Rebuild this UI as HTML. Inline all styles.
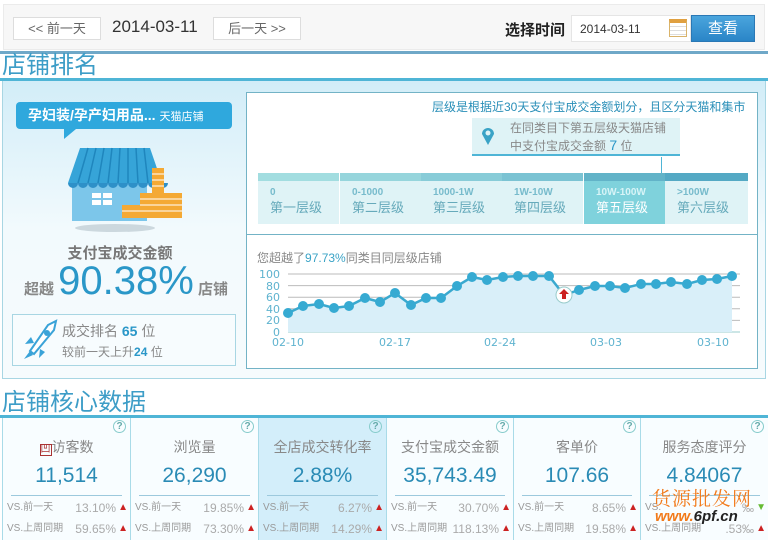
<!DOCTYPE html>
<html><head><meta charset="utf-8"><style>
*{margin:0;padding:0;box-sizing:border-box}
body{width:768px;height:540px;overflow:hidden;background:#fff;font-family:"Liberation Sans","Noto Sans CJK SC",sans-serif;position:relative;color:#555}
.a{position:absolute}
.btn{position:absolute;top:17px;height:23px;border:1px solid #ddd;background:#fff;font-size:13px;color:#666;text-align:center;line-height:21px}
.tier{position:absolute;top:181px;height:43px;width:81px;background:#dff3f6;color:#5bb;font-size:12px;padding:5px 0 0 12px;line-height:14px}
.tier b{font-size:10px;color:#7bc;font-weight:bold;display:block}
.tier span{color:#6ab;font-size:13px;line-height:16px}
.card{position:absolute;top:418px;height:122px;border-left:1px solid #a9dbe8;background:#f8fdff;text-align:center}
.card .t{margin-top:19px;font-size:14px;color:#888}
.card .v{font-size:21px;color:#2a8bb5;margin-top:6px;line-height:26px}
.card .ln{margin:6px 8px 0;border-top:1px solid #9cc9dd}
.card .r{font-size:10px;color:#999;text-align:left;padding:0 4px;position:relative;height:21px;line-height:20px}
.card .r i{font-style:normal;position:absolute;right:14px;font-size:12px;color:#aaa}
.card .r u{text-decoration:none;position:absolute;right:2px;top:0;color:#c22;font-size:10px}
.q{position:absolute;right:4px;top:2px;width:13px;height:13px;border:1px solid #8cc;border-radius:50%;font-size:10px;line-height:11px;color:#6aa;font-weight:bold}
</style></head><body>
<div class="a" style="left:3px;top:4px;width:762px;height:46px;background:#f7f7f7;border:1px solid #ebebeb"></div>
<div class="btn" style="left:13px;width:88px">&lt;&lt; 前一天</div>
<div class="a" style="left:112px;top:17px;font-size:17px;color:#333">2014-03-11</div>
<div class="btn" style="left:213px;width:88px">后一天 &gt;&gt;</div>
<div class="a" style="left:505px;top:19px;font-size:15px;font-weight:bold;color:#222">选择时间</div>
<div class="a" style="left:571px;top:15px;width:120px;height:27px;background:#fff;border:1px solid #e5e5e5;font-size:12px;color:#333;padding:6px 8px">2014-03-11</div>
<div class="a" style="left:669px;top:19px;width:18px;height:18px;background:repeating-linear-gradient(#fff 0 3px,#ddd 3px 4px);border:1px solid #d9b36a;border-top:4px solid #e0a040"></div>
<div class="a" style="left:691px;top:15px;width:64px;height:27px;background:linear-gradient(#4aa5dd,#2a85c7);border:1px solid #2a78b5;color:#fff;font-size:15px;text-align:center;line-height:25px">查看</div>
<div class="a" style="left:0;top:51px;width:768px;height:3px;background:#6fa8c8"></div>
<div class="a" style="left:2px;top:52px;font-size:24px;color:#3d9dc7;line-height:28px">店铺排名</div>
<div class="a" style="left:0;top:78px;width:768px;height:3px;background:#4fb5d6"></div>
<div class="a" style="left:2px;top:81px;width:764px;height:298px;background:linear-gradient(#d2edf8,#f2fafd 50%,#f6fbfd);border:1px solid #a8d6e3;border-top:none"></div>
<div class="a" style="left:16px;top:102px;width:216px;height:27px;background:#2fa8dd;border-radius:4px;color:#fff;font-size:14px;font-weight:bold;padding:4px 12px;line-height:19px">孕妇装/孕产妇用品... <span style="font-weight:normal;font-size:11px">天猫店铺</span></div>
<div class="a" style="left:64px;top:129px;width:0;height:0;border-left:12px solid #2fa8dd;border-bottom:10px solid transparent"></div>
<svg class="a" style="left:60px;top:143px" width="130" height="90" viewBox="0 0 130 90">
<ellipse cx="55" cy="85" rx="40" ry="4" fill="#ccd8de"/>
<rect x="12" y="40" width="75" height="38" fill="#7cc6ea"/>
<rect x="32" y="50" width="20" height="12" fill="#fff"/><rect x="41" y="50" width="2" height="12" fill="#7cc6ea"/><rect x="32" y="55" width="20" height="2" fill="#7cc6ea"/>
<path d="M20 5h70l12 35h-94z" fill="#36a4d8"/>
<g stroke="#1f86bd" stroke-width="1.5"><line x1="28" y1="5" x2="18" y2="40"/><line x1="36" y1="5" x2="28" y2="40"/><line x1="44" y1="5" x2="38" y2="40"/><line x1="52" y1="5" x2="48" y2="40"/><line x1="60" y1="5" x2="58" y2="40"/><line x1="68" y1="5" x2="68" y2="40"/><line x1="76" y1="5" x2="78" y2="40"/><line x1="84" y1="5" x2="88" y2="40"/></g>
<path d="M8 40a5 5 0 0 0 10 0a5 5 0 0 0 10 0a5 5 0 0 0 10 0a5 5 0 0 0 10 0a5 5 0 0 0 10 0a5 5 0 0 0 10 0a5 5 0 0 0 10 0a5 5 0 0 0 10 0a5 5 0 0 0 10 0a5 5 0 0 0 10 0z" fill="#2e90c8"/>
<rect x="92" y="25" width="12" height="50" fill="#f4a934"/><rect x="80" y="50" width="42" height="25" fill="#f4a934"/><rect x="62" y="62" width="60" height="13" fill="#f4a934"/>
<g stroke="#fff" stroke-width="1"><line x1="62" y1="68" x2="122" y2="68"/><line x1="80" y1="56" x2="122" y2="56"/><line x1="92" y1="31" x2="104" y2="31"/><line x1="92" y1="37" x2="104" y2="37"/><line x1="92" y1="43" x2="104" y2="43"/><line x1="80" y1="62" x2="122" y2="62"/></g>
</svg>
<div class="a" style="left:0;top:242px;width:240px;text-align:center;font-size:15px;color:#777;font-weight:bold">支付宝成交金额</div>
<div class="a" style="left:24px;top:258px;font-size:40px;color:#2a97c8;line-height:46px"><span style="font-size:15px;color:#888;font-weight:bold">超越 </span>90.38%<span style="font-size:15px;color:#888;font-weight:bold"> 店铺</span></div>
<div class="a" style="left:12px;top:314px;width:224px;height:52px;border:1px solid #a8d6e3;background:#f7fcfe"></div>
<svg class="a" style="left:20px;top:317px" width="42" height="44"><path d="M10 34l18-26 8-4 -2 9 -20 24z" fill="#fff" stroke="#3aa3d8" stroke-width="2"/><path d="M10 34l-6 8 9-4z M14 26l-9 1 6-7z M20 32l-1 9 6-6z" fill="#3aa3d8"/><circle cx="27" cy="16" r="3" fill="#3aa3d8"/></svg>
<div class="a" style="left:62px;top:321px;font-size:14px;color:#888">成交排名 <b style="color:#2a97c8">65</b> 位</div>
<div class="a" style="left:62px;top:343px;font-size:12px;color:#888">较前一天上升<b style="color:#2a97c8">24</b> 位</div>
<div class="a" style="left:246px;top:92px;width:512px;height:277px;background:#fff;border:1px solid #73b3c6"></div>
<div class="a" style="left:246px;top:234px;width:512px;height:1px;background:#73b3c6"></div>
<div class="a" style="left:432px;top:98px;font-size:12px;color:#2a8fb8">层级是根据近30天支付宝成交金额划分，且区分天猫和集市</div>
<div class="a" style="left:472px;top:118px;width:208px;height:38px;background:#dff3f6;border-bottom:2px solid #4fb5d6;font-size:12px;color:#888;padding:2px 0 0 38px;line-height:17px">在同类目下第五层级天猫店铺<br>中支付宝成交金额 <span style="color:#2a97c8;font-size:14px">7</span> 位</div>
<svg class="a" style="left:481px;top:126px" width="14" height="20"><path d="M7 19L1 8a6 6 0 1 1 12 0z" fill="#3aa3c6"/><circle cx="7" cy="7" r="2.5" fill="#dff3f6"/></svg>
<div class="a" style="left:661px;top:157px;width:1px;height:20px;background:#4fb5d6"></div>
<div class="a" style="left:258px;top:173px;width:81px;height:8px;background:#a2dde0"></div>
<div class="a" style="left:340px;top:173px;width:81px;height:8px;background:#96d5dc"></div>
<div class="a" style="left:421px;top:173px;width:81px;height:8px;background:#88ccd8"></div>
<div class="a" style="left:502px;top:173px;width:81px;height:8px;background:#7bc3d3"></div>
<div class="a" style="left:584px;top:173px;width:81px;height:8px;background:#62b3c8"></div>
<div class="a" style="left:665px;top:173px;width:83px;height:8px;background:#54a9c4"></div>
<div class="tier" style="left:258px"><b>0</b><span>第一层级</span></div>
<div class="tier" style="left:340px"><b>0-1000</b><span>第二层级</span></div>
<div class="tier" style="left:421px"><b>1000-1W</b><span>第三层级</span></div>
<div class="tier" style="left:502px"><b>1W-10W</b><span>第四层级</span></div>
<div class="tier" style="left:584px;background:#7fd2dc;color:#fff"><b style="color:#d8f4f7">10W-100W</b><span style="color:#fff">第五层级</span></div>
<div class="tier" style="left:665px;width:83px"><b>&gt;100W</b><span>第六层级</span></div>
<div class="a" style="left:257px;top:249px;font-size:12px;color:#888">您超越了<span style="color:#3aa3c6">97.73%</span>同类目同层级店铺</div>
<svg class="a" style="left:250px;top:262px" width="500" height="90" viewBox="250 262 500 90">
<g stroke="#bbb" stroke-width="1"><line x1="288" y1="274" x2="740" y2="274"/><line x1="288" y1="285.6" x2="740" y2="285.6"/><line x1="288" y1="297.2" x2="740" y2="297.2"/><line x1="288" y1="308.8" x2="740" y2="308.8"/><line x1="288" y1="320.4" x2="740" y2="320.4"/><line x1="288" y1="332" x2="740" y2="332" stroke="#9cc"/></g>
<g font-size="11" fill="#5fb3cf" font-family="DejaVu Sans" text-anchor="end"><text x="280" y="278">100</text><text x="280" y="290">80</text><text x="280" y="301">60</text><text x="280" y="313">40</text><text x="280" y="324">20</text><text x="280" y="336">0</text></g>
<g font-size="11" fill="#5fb3cf" font-family="DejaVu Sans" text-anchor="middle"><text x="288" y="346">02-10</text><text x="395" y="346">02-17</text><text x="500" y="346">02-24</text><text x="606" y="346">03-03</text><text x="713" y="346">03-10</text></g>
<polygon fill="#d9eff9" points="288,332 288,313 303,306 319,304 334,308 349,306 365,298 380,302 395,293 411,305 426,298 441,298 457,286 472,277 487,280 503,277 518,276 533,276 549,276 564,295 579,290 595,286 610,286 625,288 641,284 656,284 671,282 687,284 702,280 717,279 732,276 732,332"/>
<polyline fill="none" stroke="#3aa9cf" stroke-width="2.5" points="288,313 303,306 319,304 334,308 349,306 365,298 380,302 395,293 411,305 426,298 441,298 457,286 472,277 487,280 503,277 518,276 533,276 549,276 564,295 579,290 595,286 610,286 625,288 641,284 656,284 671,282 687,284 702,280 717,279 732,276"/>
<g fill="#36aad2"><circle cx="288" cy="313" r="5"/><circle cx="303" cy="306" r="5"/><circle cx="319" cy="304" r="5"/><circle cx="334" cy="308" r="5"/><circle cx="349" cy="306" r="5"/><circle cx="365" cy="298" r="5"/><circle cx="380" cy="302" r="5"/><circle cx="395" cy="293" r="5"/><circle cx="411" cy="305" r="5"/><circle cx="426" cy="298" r="5"/><circle cx="441" cy="298" r="5"/><circle cx="457" cy="286" r="5"/><circle cx="472" cy="277" r="5"/><circle cx="487" cy="280" r="5"/><circle cx="503" cy="277" r="5"/><circle cx="518" cy="276" r="5"/><circle cx="533" cy="276" r="5"/><circle cx="549" cy="276" r="5"/><circle cx="579" cy="290" r="5"/><circle cx="595" cy="286" r="5"/><circle cx="610" cy="286" r="5"/><circle cx="625" cy="288" r="5"/><circle cx="641" cy="284" r="5"/><circle cx="656" cy="284" r="5"/><circle cx="671" cy="282" r="5"/><circle cx="687" cy="284" r="5"/><circle cx="702" cy="280" r="5"/><circle cx="717" cy="279" r="5"/><circle cx="732" cy="276" r="5"/></g>
<circle cx="564" cy="295" r="8" fill="#fff" stroke="#9cc"/><path d="M564 289l-5 5h3v5h4v-5h3z" fill="#c22"/>
</svg>
<div class="a" style="left:2px;top:388px;font-size:24px;color:#3d9dc7;line-height:30px">店铺核心数据</div>
<div class="a" style="left:0;top:415px;width:768px;height:3px;background:#4fb5d6"></div>
<div class="card" style="left:2px;width:128px"><div class="q">?</div><div class="t"><span style="color:#a33;font-size:10px;border:1px solid #a33;line-height:10px;display:inline-block">凹</span>访客数</div><div class="v">11,514</div><div class="ln"></div><div class="r" style="margin-top:2px">VS.前一天<i>13.10%</i><u>▲</u></div><div class="r">VS.上周同期<i>59.65%</i><u>▲</u></div></div>
<div class="card" style="left:130px;width:128px"><div class="q">?</div><div class="t">浏览量</div><div class="v">26,290</div><div class="ln"></div><div class="r" style="margin-top:2px">VS.前一天<i>19.85%</i><u>▲</u></div><div class="r">VS.上周同期<i>73.30%</i><u>▲</u></div></div>
<div class="card" style="left:258px;width:128px;background:#d3eefa"><div class="q">?</div><div class="t">全店成交转化率</div><div class="v">2.88%</div><div class="ln"></div><div class="r" style="margin-top:2px">VS.前一天<i>6.27%</i><u>▲</u></div><div class="r">VS.上周同期<i>14.29%</i><u>▲</u></div></div>
<div class="card" style="left:386px;width:127px"><div class="q">?</div><div class="t">支付宝成交金额</div><div class="v">35,743.49</div><div class="ln"></div><div class="r" style="margin-top:2px">VS.前一天<i>30.70%</i><u>▲</u></div><div class="r">VS.上周同期<i>118.13%</i><u>▲</u></div></div>
<div class="card" style="left:513px;width:127px"><div class="q">?</div><div class="t">客单价</div><div class="v">107.66</div><div class="ln"></div><div class="r" style="margin-top:2px">VS.前一天<i>8.65%</i><u>▲</u></div><div class="r">VS.上周同期<i>19.58%</i><u>▲</u></div></div>
<div class="card" style="left:640px;width:128px"><div class="q">?</div><div class="t">服务态度评分</div><div class="v">4.84067</div><div class="ln"></div><div class="r" style="margin-top:2px">VS.<i>‰</i><u style="color:#6b3">▼</u></div><div class="r">VS.上周同期<i>.53‰</i><u>▲</u></div></div>
<div class="a" style="left:652px;top:484px;font-size:19px;color:#f27a1a;font-family:'Noto Serif CJK SC',serif;letter-spacing:1px">货源批发网</div>
<div class="a" style="left:655px;top:508px;font-size:15px;color:#f27a1a;font-style:italic;font-weight:bold">www.<span style="color:#222">6pf.cn</span></div>
</body></html>
